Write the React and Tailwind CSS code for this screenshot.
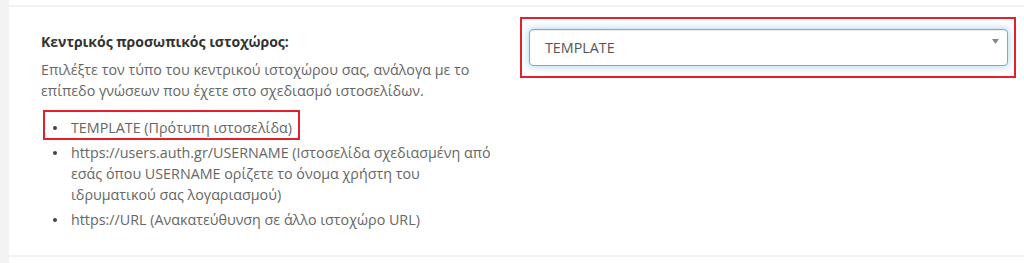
export default function App() {
  const items = [
    "TEMPLATE (Πρότυπη ιστοσελίδα)",
    "https://users.auth.gr/USERNAME (Ιστοσελίδα σχεδιασμένη από εσάς όπου USERNAME ορίζετε το όνομα χρήστη του ιδρυματικού σας λογαριασμού)",
    "https://URL (Ανακατεύθυνση σε άλλο ιστοχώρο URL)",
  ];

  return (
    <div className="flex h-[263px] w-[1024px] overflow-hidden bg-white font-['Open_Sans',sans-serif] text-[14.3px]">
      <div className="w-[9px] shrink-0 bg-[#f3f3f3]" />
      <div className="flex flex-1 flex-col">
        <div className="mt-[5px] h-[2px] bg-[#f2f2f2]" />
        <div className="flex h-[248px]">
          {/* left column */}
          <div className="w-[520px] shrink-0 pl-[32px] pt-[25px]">
            <h3 className="text-[14px] leading-[20px] font-bold text-[#333]">
              Κεντρικός προσωπικός ιστοχώρος:
            </h3>
            <p className="mt-[7px] w-[450px] leading-[21px] text-[#666]">
              Επιλέξτε τον τύπο του κεντρικού ιστοχώρου σας, ανάλογα με το επίπεδο γνώσεων που έχετε στο σχεδιασμό ιστοσελίδων.
            </p>
            <ul className="mt-[16px] flex w-[452px] flex-col gap-[4px] text-[#666]">
              {items.map((t, i) => (
                <li key={i} className="relative flex leading-[21px]">
                  <span className="flex w-[30px] shrink-0 justify-center pt-[9px] pr-[2px]">
                    <span className="h-[4px] w-[4px] rounded-full bg-[#444]" />
                  </span>
                  <span>{t}</span>
                  {i === 0 && (
                    <span className="pointer-events-none absolute top-[-7px] left-[2px] h-[30px] w-[257px] border-2 border-[#e3202b]" />
                  )}
                </li>
              ))}
            </ul>
          </div>

          {/* right column */}
          <div className="flex-1 pt-[22px] pr-[16px]">
            <div className="relative">
              <div className="flex h-[37px] items-center justify-between rounded-[4px] border border-[#66afe9] bg-white pl-[15px] pr-[8px] text-[#555] shadow-[inset_0_1px_1px_rgba(0,0,0,0.075),0_0_8px_rgba(102,175,233,0.6)]">
                <span>TEMPLATE</span>
                <svg width="7" height="5" viewBox="0 0 7 5" className="mb-[12px]">
                  <path d="M0 0h7L3.5 5z" fill="#888" />
                </svg>
              </div>
              <span className="pointer-events-none absolute top-[-12px] left-[-9px] h-[61px] w-[496px] border-2 border-[#e3202b]" />
            </div>
          </div>
        </div>
        <div className="h-[2px] bg-[#f2f2f2]" />
      </div>
    </div>
  );
}
